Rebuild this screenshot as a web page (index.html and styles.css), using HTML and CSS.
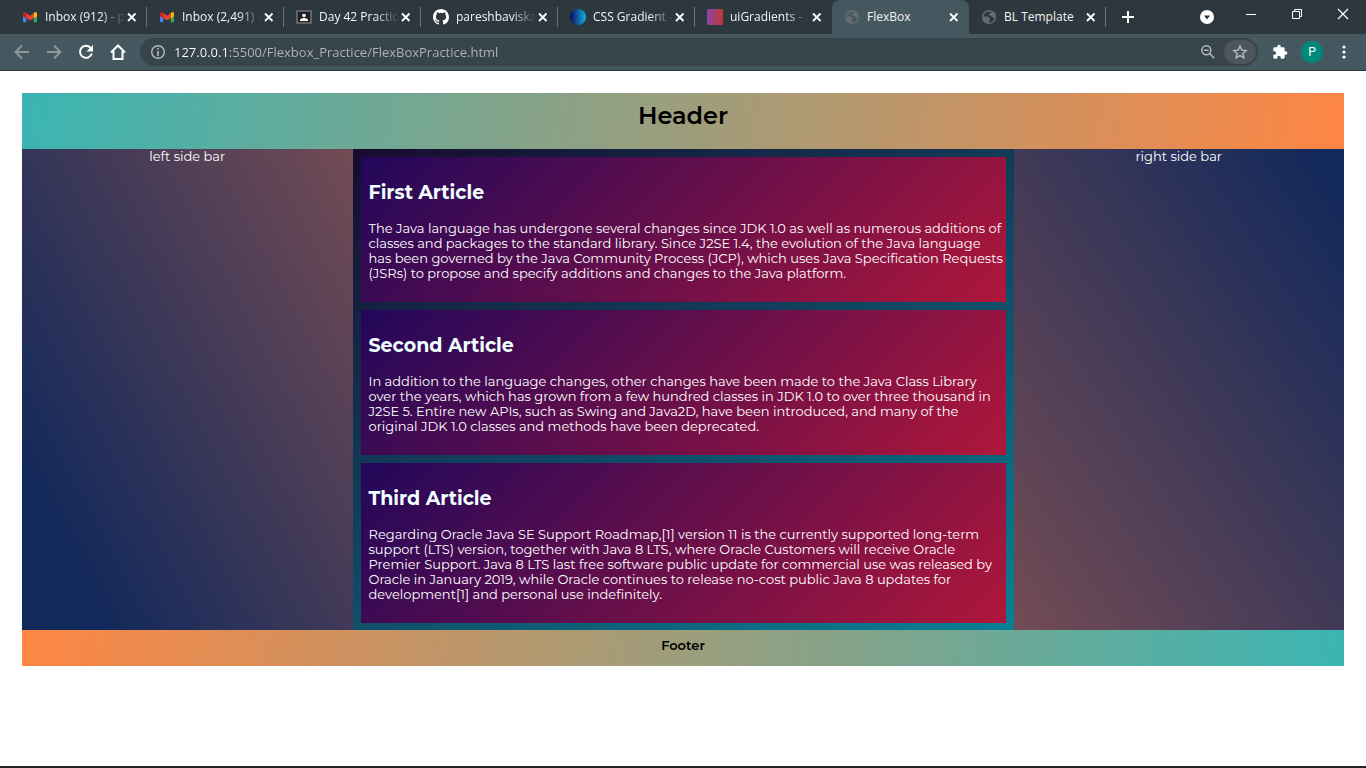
FILE: index.html
```html
<!DOCTYPE html>
<html lang="en">
<head>
<meta charset="utf-8">
<meta name="viewport" content="width=device-width, initial-scale=1">
<title>FlexBox</title>
<link rel="stylesheet" href="styles.css">
</head>
<body>
<svg class="defs" width="0" height="0" aria-hidden="true">
  <symbol id="x" viewBox="0 0 16 16"><path d="M4 4.500l7.500 7.500M11.500 4.500L4 12" stroke="currentColor" stroke-width="1.800" fill="none"/></symbol>
  <symbol id="gmail" viewBox="0 0 16 16">
    <path d="M1 4v8.500q0 .7.800.7H4.300V7.500z" fill="#4285f4"/>
    <path d="M15 4v8.500q0 .7-.8.700H11.700V7.500z" fill="#34a853"/>
    <path d="M1 7.200V4.500Q1.100 2.700 3 2.900L4.300 3.900v5.700z" fill="#c5221f"/>
    <path d="M15 7.200V4.500Q14.900 2.700 13 2.900L11.700 3.900v5.700z" fill="#fbbc04"/>
    <path d="M4.300 3.900L8 6.700l3.700-2.800v5L8 11.600 4.300 8.900z" fill="#ea4335"/>
  </symbol>
  <symbol id="globe" viewBox="0 0 16 16"><circle cx="8" cy="8" r="6.300" fill="none" stroke="#666c71" stroke-width="1.500"/><path fill="#666c71" d="M1.500 8.500l3-1 3 .3 1.500 2-.5 1.700-1 3A7 7 0 011.500 8.500zM7 1.500l4.500.6-1.500 1.700-2.200 1L8 6.500l2.500.5 1.500 2 1-.5 1.800.5 0-3A7 7 0 007 1.500z"/></symbol>
</svg>

<header class="browser">
  <div class="strip">
    <nav class="tabs" aria-label="Open tabs">
      <div class="tab"><svg class="fav"><use href="#gmail"/></svg><a class="name" href="#">Inbox (912) - p</a><button class="shut" aria-label="Close tab"><svg><use href="#x"/></svg></button></div>
      <div class="tab"><svg class="fav"><use href="#gmail"/></svg><a class="name" href="#">Inbox (2,491) -</a><button class="shut" aria-label="Close tab"><svg><use href="#x"/></svg></button></div>
      <div class="tab"><svg class="fav" viewBox="0 0 16 16"><path d="M0 1h16v14H0z" fill="#5f6368"/><path d="M2 3h12v10H2z" fill="#202124"/><circle cx="8" cy="6.500" r="1.800" fill="#fff"/><path d="M4 12v-1.500Q5 9 8 9t4 1.500V12z" fill="#fff"/></svg><a class="name" href="#">Day 42 Practic</a><button class="shut" aria-label="Close tab"><svg><use href="#x"/></svg></button></div>
      <div class="tab"><svg class="fav" viewBox="0 0 16 16"><path fill="#fff" d="M8 0C3.580 0 0 3.580 0 8c0 3.540 2.290 6.530 5.470 7.590.4.070.55-.17.550-.38 0-.19-.01-.82-.01-1.490-2.010.37-2.530-.49-2.690-.94-.09-.23-.48-.94-.82-1.130-.28-.15-.68-.52-.01-.53.630-.01 1.080.58 1.230.82.720 1.210 1.870.87 2.330.66.070-.52.280-.87.510-1.070-1.780-.2-3.640-.89-3.640-3.950 0-.87.310-1.590.82-2.150-.08-.2-.36-1.020.08-2.120 0 0 .67-.21 2.200.82a7.600 7.600 0 014 0c1.530-1.040 2.200-.82 2.200-.82.440 1.100.16 1.920.08 2.120.51.560.82 1.270.82 2.150 0 3.070-1.870 3.750-3.650 3.950.29.250.54.730.54 1.480 0 1.070-.01 1.930-.01 2.200 0 .21.150.46.550.38A8 8 0 0016 8c0-4.420-3.580-8-8-8z"/></svg><a class="name" href="#">pareshbaviska</a><button class="shut" aria-label="Close tab"><svg><use href="#x"/></svg></button></div>
      <div class="tab"><svg class="fav" viewBox="0 0 16 16"><defs><linearGradient id="g1"><stop stop-color="#090a5c"/><stop offset="1" stop-color="#13b4e0"/></linearGradient></defs><circle cx="8" cy="8" r="8" fill="url(#g1)"/></svg><a class="name" href="#">CSS Gradient -</a><button class="shut" aria-label="Close tab"><svg><use href="#x"/></svg></button></div>
      <div class="tab last"><svg class="fav" viewBox="0 0 16 16"><defs><linearGradient id="g2"><stop stop-color="#8e44ad"/><stop offset="1" stop-color="#c0392b"/></linearGradient></defs><rect width="16" height="16" rx="1" fill="url(#g2)"/></svg><a class="name" href="#">uiGradients -</a><button class="shut" aria-label="Close tab"><svg><use href="#x"/></svg></button></div>
      <div class="tab active"><svg class="fav"><use href="#globe"/></svg><a class="name" href="#" aria-current="page">FlexBox</a><button class="shut" aria-label="Close tab"><svg><use href="#x"/></svg></button></div>
      <div class="tab"><svg class="fav"><use href="#globe"/></svg><a class="name" href="#">BL Template</a><button class="shut" aria-label="Close tab"><svg><use href="#x"/></svg></button></div>
    </nav>
    <button class="add" aria-label="New tab"><svg viewBox="0 0 16 16"><path d="M8 2v12M2 8h12" stroke="#fff" stroke-width="2"/></svg></button>
    <div class="window">
      <button class="search" aria-label="Search tabs"><svg viewBox="0 0 16 16"><circle cx="8" cy="8" r="7" fill="#fff"/><path d="M5 6.500h6L8 10.500z" fill="#2d383e"/></svg></button>
      <button aria-label="Minimize"><svg viewBox="0 0 16 16"><path d="M3 7.500h10" stroke="#fff"/></svg></button>
      <button aria-label="Restore"><svg viewBox="0 0 16 16"><path d="M3.500 4.500h7v7h-7zM5.500 4.500v-2h7v7h-2" fill="none" stroke="#fff"/></svg></button>
      <button aria-label="Close window"><svg viewBox="0 0 16 16"><path d="M3 2l10 10M13 2L3 12" stroke="#fff" stroke-width="1.200"/></svg></button>
    </div>
  </div>
  <div class="toolbar">
    <div class="group">
      <button class="dim" aria-label="Back"><svg viewBox="0 0 16 16"><path d="M15 8H2M8 1.500L1.500 8 8 14.500" fill="none" stroke="currentColor" stroke-width="1.800"/></svg></button>
      <button class="dim" aria-label="Forward"><svg viewBox="0 0 16 16"><path d="M1 8h13M8 1.500L14.500 8 8 14.500" fill="none" stroke="currentColor" stroke-width="1.800"/></svg></button>
      <button aria-label="Reload"><svg viewBox="0 0 16 16"><path d="M12.500 3.800A6 6 0 1013.800 9.500" fill="none" stroke="currentColor" stroke-width="2"/><path d="M15 1v6.500H8.500z" fill="currentColor"/></svg></button>
      <button aria-label="Home"><svg viewBox="0 0 16 16"><path d="M1 8.500L8 1.500l7 7M3.500 7v8h9V7" fill="none" stroke="currentColor" stroke-width="2"/></svg></button>
    </div>
    <div class="omnibox">
      <svg class="info" viewBox="0 0 16 16"><circle cx="8" cy="8" r="6.300" fill="none" stroke="currentColor" stroke-width="1.400"/><path d="M8 7v5M8 4v1.600" stroke="currentColor" stroke-width="1.600"/></svg>
      <input class="url" type="text" aria-label="Address" value="127.0.0.1:5500/Flexbox_Practice/FlexBoxPractice.html">
      <button class="lens" aria-label="Zoom"><svg viewBox="0 0 16 16"><circle cx="6.300" cy="6.300" r="4.500" fill="none" stroke="currentColor" stroke-width="1.500"/><path d="M9.800 9.800l4.500 4.500M4 6.300h4.600" stroke="currentColor" stroke-width="1.500"/></svg></button>
      <button class="star" aria-label="Bookmark"><svg viewBox="0 0 16 16"><path d="M8 2l1.800 4.100 4.400.4-3.300 3 1 4.400L8 11.600l-3.900 2.300 1-4.400-3.300-3 4.400-.4z" fill="none" stroke="currentColor" stroke-width="1.400"/></svg></button>
    </div>
    <div class="group">
      <button aria-label="Extensions"><svg viewBox="0 0 24 24"><path fill="currentColor" d="M20.500 11H19V7c0-1.100-.9-2-2-2h-4V3.500C13 2.120 11.880 1 10.500 1S8 2.120 8 3.500V5H4c-1.100 0-1.990.9-1.990 2v3.800H3.500c1.490 0 2.700 1.210 2.700 2.700s-1.210 2.700-2.700 2.700H2V20c0 1.100.9 2 2 2h3.800v-1.500c0-1.490 1.210-2.700 2.700-2.700s2.700 1.210 2.700 2.700V22H17c1.100 0 2-.9 2-2v-4h1.500c1.380 0 2.500-1.120 2.500-2.500S21.880 11 20.500 11z"/></svg></button>
      <button class="profile" aria-label="Profile P"><span class="avatar">P</span></button>
      <button aria-label="Menu"><svg viewBox="0 0 16 16" fill="currentColor"><circle cx="8" cy="3" r="1.600"/><circle cx="8" cy="8" r="1.600"/><circle cx="8" cy="13" r="1.600"/></svg></button>
    </div>
  </div>
</header>

<div class="page">
  <div class="banner"><h1>Header</h1></div>
  <div class="columns">
    <aside class="side left">left side bar</aside>
    <main class="articles">
      <article>
        <h2>First Article</h2>
        <p>The Java language has undergone several changes since JDK 1.0 as well as numerous additions of<br>classes and packages to the standard library. Since J2SE 1.4, the evolution of the Java language<br>has been governed by the Java Community Process (JCP), which uses Java Specification Requests<br>(JSRs) to propose and specify additions and changes to the Java platform.</p>
      </article>
      <article>
        <h2>Second Article</h2>
        <p>In addition to the language changes, other changes have been made to the Java Class Library<br>over the years, which has grown from a few hundred classes in JDK 1.0 to over three thousand in<br>J2SE 5. Entire new APIs, such as Swing and Java2D, have been introduced, and many of the<br>original JDK 1.0 classes and methods have been deprecated.</p>
      </article>
      <article>
        <h2>Third Article</h2>
        <p>Regarding Oracle Java SE Support Roadmap,[1] version 11 is the currently supported long-term<br>support (LTS) version, together with Java 8 LTS, where Oracle Customers will receive Oracle<br>Premier Support. Java 8 LTS last free software public update for commercial use was released by<br>Oracle in January 2019, while Oracle continues to release no-cost public Java 8 updates for<br>development[1] and personal use indefinitely.</p>
      </article>
    </main>
    <aside class="side right">right side bar</aside>
  </div>
  <footer class="foot">Footer</footer>
</div>
<div class="edge"></div>
</body>
</html>
```
FILE: styles.css
```css
* { box-sizing: border-box; }
body {
  margin: 0;
  min-height: 100vh;
  display: flex;
  flex-direction: column;
  background: #fff;
  font-family: Montserrat, Inter, sans-serif;
  font-size: 13px;
  line-height: 15px;
}
.defs { position: absolute; }
button {
  border: 0;
  padding: 0;
  background: none;
  color: #fff;
  display: flex;
  align-items: center;
  justify-content: center;
}
svg { display: block; width: 16px; height: 16px; flex: none; }

/* Browser frame */
.browser {
  background: #455860;
  border-bottom: 1px solid #2d383e;
  font-family: "Segoe UI", "Open Sans", sans-serif;
}
.strip { display: flex; height: 34px; background: #2d383e; padding-left: 10px; }
.tabs { display: flex; }
.tab {
  width: 137px;
  height: 34px;
  display: flex;
  align-items: center;
  padding: 0 7px 0 12px;
  background: linear-gradient(#6b7479, #6b7479) right center / 1px 20px no-repeat;
}
.tab.last { background: none; }
.tab.active { background: #455860; border-radius: 8px 8px 0 0; }
.name {
  flex: 1;
  margin-left: 7px;
  overflow: hidden;
  white-space: nowrap;
  color: #f1f3f4;
  font-size: 12px;
  line-height: 20px;
  text-decoration: none;
  mask-image: linear-gradient(90deg, #000 56px, transparent 80px);
}
.tab.active .name, .tab:last-child .name { mask-image: none; }
.shut { width: 16px; height: 16px; }
.add { width: 44px; }
.window { display: flex; margin-left: auto; align-items: flex-start; }
.window button { width: 46px; height: 30px; }
.window .search { width: 42px; height: 34px; }

.toolbar { display: flex; height: 36px; align-items: center; padding: 0 6px; }
.group { display: flex; }
.group button { width: 32px; height: 28px; }
.group .dim { color: #8f9a9f; }
.omnibox {
  flex: 1;
  display: flex;
  align-items: center;
  height: 28px;
  margin: 0 6px;
  padding: 0 2px 0 10px;
  border-radius: 14px;
  background: #37444b;
  color: #b5bbbe;
}
.url {
  flex: 1;
  min-width: 0;
  margin-left: 8px;
  border: 0;
  padding: 0;
  height: 24px;
  font: 13px "Segoe UI", "Open Sans", sans-serif;
  color: transparent;
  background: linear-gradient(90deg, #fff 55px, #b0b7ba 55px);
  background-clip: text;
}
.omnibox button { color: #b5bbbe; width: 32px; height: 24px; }
.omnibox .star { background: #4b555b; border-radius: 12px; }
.avatar {
  width: 22px;
  height: 22px;
  border-radius: 50%;
  background: #00897b;
  font: 12px/22px Roboto, sans-serif;
}

/* Page */
.page { flex: 1; padding: 22px; }
.banner {
  padding: 8px 8px 18px;
  text-align: center;
  background: linear-gradient(100deg, #3ab5b3, #ff8644);
}
h1 { margin: 0; font-size: 24px; line-height: 30px; font-weight: 600; }
.columns { display: grid; grid-template-columns: minmax(0, 1fr) minmax(0, 2fr) minmax(0, 1fr); }
.side { color: #fff; text-align: center; font-size: 13px; }
.left { background: linear-gradient(62deg, #12295b 14%, #734b54); }
.right { background: linear-gradient(236deg, #12295b 4%, #734b54); }
.articles {
  display: flex;
  flex-direction: column;
  gap: 8px;
  padding: 8px 8px 7px;
  background: linear-gradient(153deg, #170b2d, #0a7f94);
}
article {
  padding: 8px 8px 21px;
  color: #fff;
  background: linear-gradient(135deg, #22075a, #af173a);
}
h2 { margin: 16px 0; font-size: 19px; line-height: 24px; font-weight: 700; color: #f0ffff; }
p { margin: 0; font-size: 13px; white-space: nowrap; }
.foot {
  padding: 8px 8px 13px;
  text-align: center;
  font-weight: 600;
  background: linear-gradient(100deg, #ff8644, #3ab5b3);
}
.edge { height: 2px; background: #252323; }
```
